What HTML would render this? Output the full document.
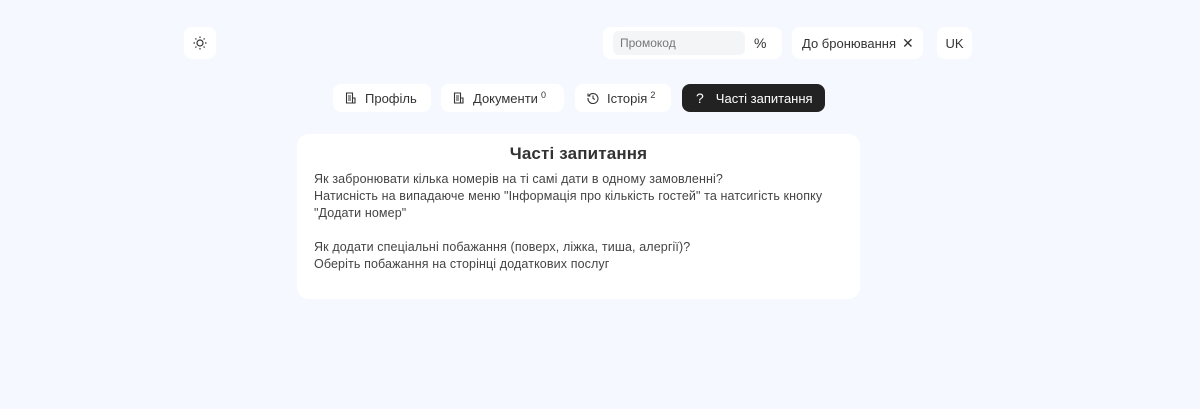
<!DOCTYPE html><html><head><meta charset="utf-8"><style>
body{margin:0;width:1200px;height:409px;background:#f5f8fe;font-family:"Liberation Sans",sans-serif;color:#333;position:relative;overflow:hidden}
.b{position:absolute;background:#fff;border-radius:8px;box-sizing:border-box;display:flex;align-items:center;font-size:13px;color:#333}
.t{height:28px;top:84px;padding-left:12px}
.t svg{margin-right:8px}
sup{font-size:9px;margin-left:3px;position:relative;top:-3px}
.card{position:absolute;left:297px;top:134px;width:563px;height:165px;background:#fff;border-radius:12px}
h1{margin:0;position:absolute;top:10px;width:100%;text-align:center;font-size:17px;font-weight:bold;color:#333;letter-spacing:.15px}
.tx{position:absolute;left:17px;top:37px;font-size:12.5px;line-height:17px;color:#444;letter-spacing:.12px}
</style></head><body>
<div class="b" style="left:184px;top:27px;width:32px;height:32px;justify-content:center">
<svg width="14" height="14" viewBox="0 0 14 14" fill="none" stroke="#333" stroke-width="1.2"><circle cx="7" cy="7" r="3"/><path d="M7 0.5v1.5M7 12v1.5M0.5 7h1.5M12 7h1.5M2.4 2.4l1 1M10.6 10.6l1 1M2.4 11.6l1-1M10.6 3.4l1-1"/></svg></div>
<div class="b" style="left:603px;top:27px;width:179px;height:32px">
<div style="position:absolute;left:10px;top:4px;width:132px;height:24px;background:#f4f5f7;border-radius:6px;font-size:12px;color:#777;line-height:24px;padding-left:7px;box-sizing:border-box">Промокод</div>
<span style="position:absolute;left:151px;font-size:14px">%</span></div>
<div class="b" style="left:792px;top:27px;width:131px;height:32px;padding-left:10px">До бронювання <span style="margin-left:6px;font-size:14px">✕</span></div>
<div class="b" style="left:937px;top:27px;width:35px;height:32px;justify-content:center">UK</div>
<div class="b t" style="left:333px;width:98px"><svg width="12" height="12" viewBox="0 0 12 12" fill="none" stroke="#333" stroke-width="1.1"><path d="M1.5 1h6v10h-6zM3 4h3M3 6h3M3 8h3M7.5 6h2.5v5h-2.5"/></svg>Профіль</div>
<div class="b t" style="left:441px;width:123px"><svg width="12" height="12" viewBox="0 0 12 12" fill="none" stroke="#333" stroke-width="1.1"><path d="M1.5 1h6v10h-6zM3 4h3M3 6h3M3 8h3M7.5 6h2.5v5h-2.5"/></svg>Документи<sup>0</sup></div>
<div class="b t" style="left:575px;width:96px"><svg width="12" height="12" viewBox="0 0 12 12" fill="none" stroke="#333" stroke-width="1.1"><path d="M2 3.5A5 5 0 1 1 1 6M1 1.5v2.5h2.5M6 3.5v2.8l1.8 1.2"/></svg>Історія<sup>2</sup></div>
<div class="b t" style="left:682px;width:143px;background:#222;color:#fff;padding-left:14px"><span style="margin-right:12px;font-size:14px">?</span>Часті запитання</div>
<div class="card"><h1>Часті запитання</h1>
<div class="tx">Як забронювати кілька номерів на ті самі дати в одному замовленні?<br>Натисність на випадаюче меню "Інформація про кількість гостей" та натсигість кнопку<br>"Додати номер"<br><br>Як додати спеціальні побажання (поверх, ліжка, тиша, алергії)?<br>Оберіть побажання на сторінці додаткових послуг</div></div>
</body></html>
